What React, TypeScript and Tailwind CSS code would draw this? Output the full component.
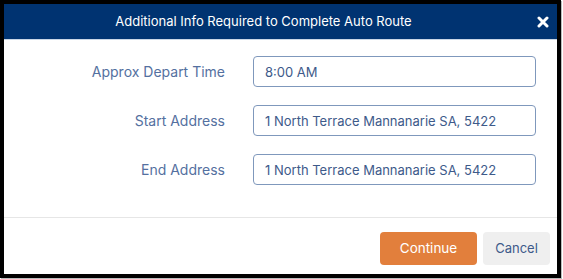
import React from 'react';

const fields = [
  { label: 'Approx Depart Time', value: '8:00 AM' },
  { label: 'Start Address', value: '1 North Terrace Mannanarie SA, 5422' },
  { label: 'End Address', value: '1 North Terrace Mannanarie SA, 5422' },
];

const App: React.FC = () => {
  return (
    <div className="w-[563px] h-[279px] bg-white" style={{ fontFamily: 'Inter, "Noto Sans", sans-serif' }}>
      <div className="w-[561px] h-[278px] border-4 border-black flex flex-col shadow-[1px_1px_0_#bbb]">
        {/* Header */}
        <div className="h-[36px] bg-[#003371] border-b border-[#c9d6e6] flex items-center">
          <div className="flex-1 text-center text-white text-[13px] pr-[6px]">
            Additional Info Required to Complete Auto Route
          </div>
          <div className="w-[28px] flex justify-center">
            <svg width="12" height="12" viewBox="0 0 12 12">
              <path d="M2 2 L10 10 M10 2 L2 10" stroke="white" strokeWidth="3" strokeLinecap="round" />
            </svg>
          </div>
        </div>

        {/* Body */}
        <div className="flex flex-col gap-[18px] pt-[16px] pb-[32px] border-b border-[#e6e6e6]">
          {fields.map((f) => (
            <div key={f.label} className="flex items-center">
              <label className="w-[221px] text-right text-[14px] text-[#5470a0]">{f.label}</label>
              <input
                type="text"
                readOnly
                value={f.value}
                className="ml-[28px] w-[283px] h-[31px] px-[11px] border border-[#7f98bc] rounded-[4px] text-[13px] text-[#3d5a8a] outline-none"
              />
            </div>
          ))}
        </div>

        {/* Footer */}
        <div className="flex justify-end gap-[6px] pt-[14px] pr-[7px]">
          <button className="w-[97px] h-[33px] rounded-[4px] bg-[#e27f3c] text-white text-[13.5px]">Continue</button>
          <button className="w-[67px] h-[33px] rounded-[4px] bg-[#efefef] text-[#3d5a8a] text-[13px]">Cancel</button>
        </div>
      </div>
    </div>
  );
};

export default App;
